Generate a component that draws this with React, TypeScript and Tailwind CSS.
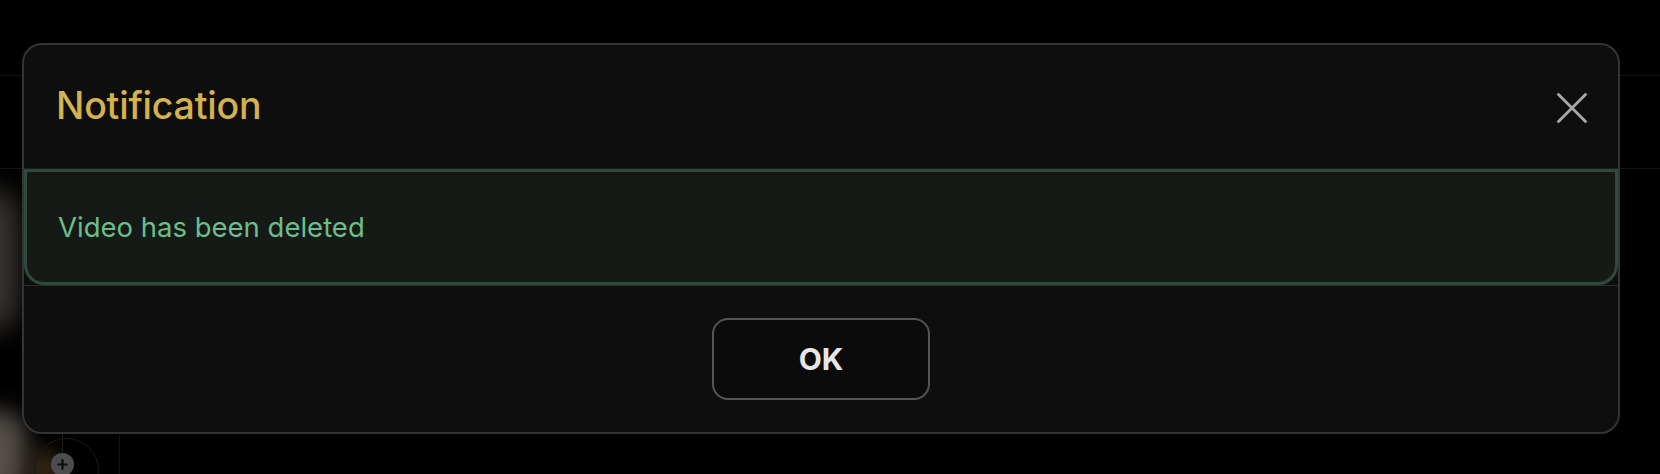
import React from 'react';

export default function App() {
  return (
    <div className="relative w-[1660px] h-[474px] bg-black overflow-hidden font-['Inter','Noto_Sans',sans-serif]">
      {/* Backdrop page (dimmed) */}
      <div className="absolute inset-0 pointer-events-none">
        <div className="absolute left-0 right-0 top-[75px] h-px bg-[#141414]" />
        <div className="absolute left-0 right-0 top-[168px] h-px bg-[#141414]" />
        <div className="absolute left-[-30px] top-[190px] w-[48px] h-[140px] rounded-full bg-[#3a3631] blur-[14px]" />
        <div className="absolute left-[-30px] top-[410px] w-[56px] h-[90px] rounded-full bg-[#56504a] blur-[12px]" />
        <div className="absolute left-[30px] top-[450px] w-[30px] h-[40px] rounded-full bg-[#3a2a18] blur-[10px]" />
        <div className="absolute left-[62px] top-[434px] w-px h-[40px] bg-[#1b1b1b]" />
        <div className="absolute left-[119px] top-[434px] w-px h-[40px] bg-[#141414]" />
        <div className="absolute left-[34px] top-[438px] w-[65px] h-[65px] rounded-full border border-[#1b1b1b]" />
        <div className="absolute left-[51px] top-[453px] w-[23px] h-[23px] rounded-full bg-[#4d4d4d] flex items-center justify-center">
          <svg viewBox="0 0 24 24" className="w-[15px] h-[15px]" fill="none" stroke="#0d0d0d" strokeWidth="3.5" strokeLinecap="round">
            <path d="M12 5v14M5 12h14" />
          </svg>
        </div>
      </div>

      <div className="relative pt-[43px] px-[22px]">
        <div className="w-[1598px] h-[391px] flex flex-col bg-[#0e0e0e] border-2 border-[#343434] rounded-[20px] overflow-hidden">
          {/* Header */}
          <div className="h-[124px] shrink-0 flex items-center justify-between pl-[32px] pr-[31px] border-b border-[#1a1f1b]">
            <h2 className="text-[37.5px] font-medium text-[#d4b24e] tracking-[-0.2px]">Notification</h2>
            <button className="text-[#a9a9a9] pt-[2px]">
              <svg viewBox="0 0 30 30" className="w-[30px] h-[30px]" fill="none" stroke="currentColor" strokeWidth="2.8" strokeLinecap="round">
                <path d="M1.5 1.5 28.5 28.5M28.5 1.5 1.5 28.5" />
              </svg>
            </button>
          </div>

          {/* Body */}
          <div className="h-[116px] shrink-0 flex items-center px-[31px] bg-[#151a16] border-[3px] border-[#2e4a3a] rounded-b-[20px]">
            <p className="text-[27.5px] text-[#6dbd8d] pt-[2px]">Video has been deleted</p>
          </div>

          {/* Footer */}
          <div className="flex-1 flex items-center justify-center border-t border-[#2a2a2a]">
            <button className="w-[218px] h-[82px] rounded-[16px] border-2 border-[#555] bg-[#0b0b0b] text-[30px] font-bold text-[#e6e6e6]">
              OK
            </button>
          </div>
        </div>
      </div>
    </div>
  );
}
